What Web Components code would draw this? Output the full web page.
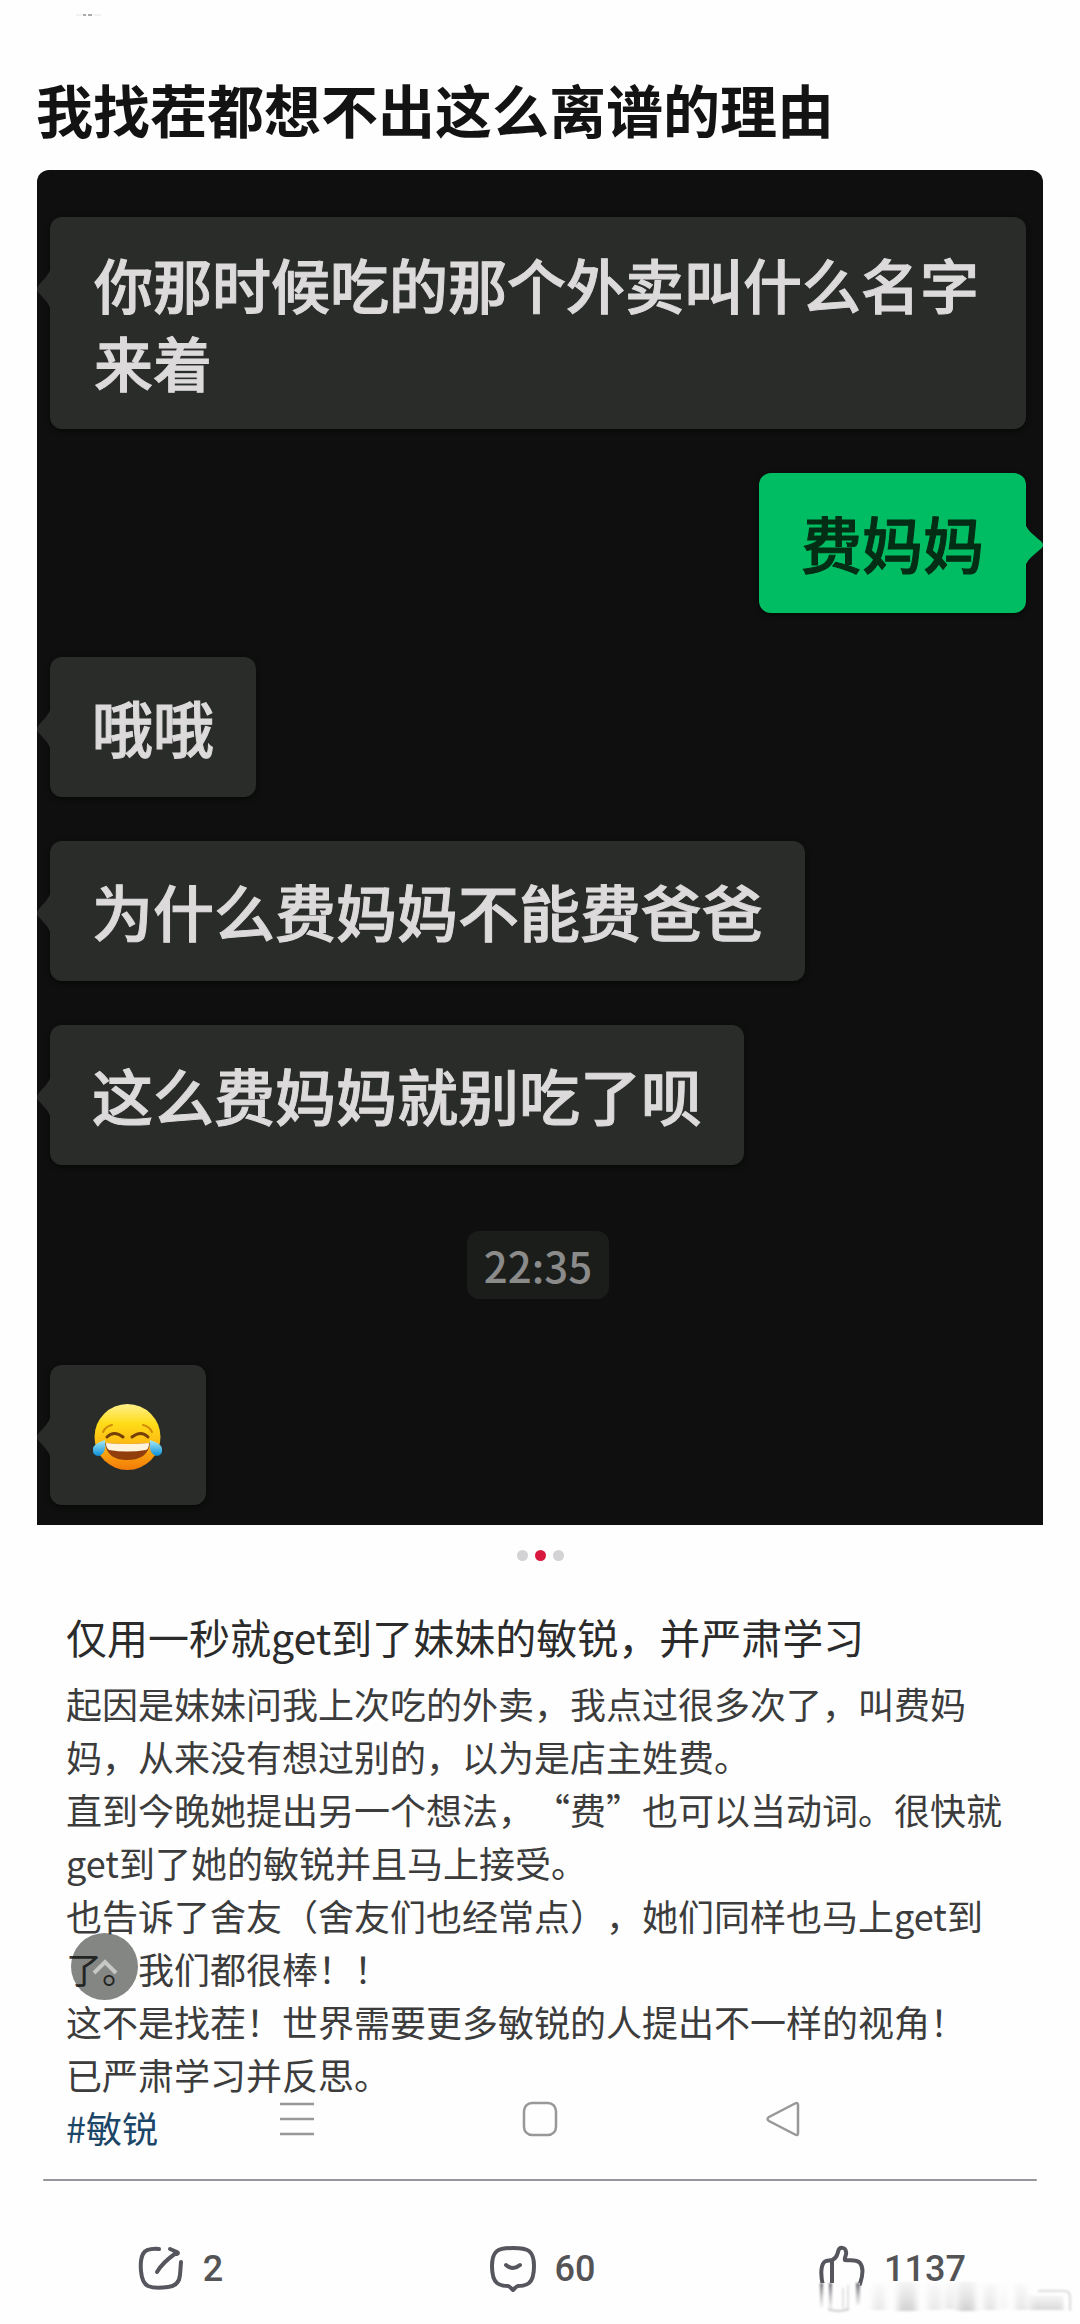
<!DOCTYPE html>
<html lang="zh-CN">
<head>
<meta charset="utf-8">
<meta name="viewport" content="width=device-width, initial-scale=1">
<title>我找茬都想不出这么离谱的理由</title>
<style>
  body { margin: 0; background: #fefefe; color: #111; font-family: "Noto Sans CJK SC", sans-serif; }
</style>
</head>
<body>
<post-page>
  <post-title slot="title">我找茬都想不出这么离谱的理由</post-title>
  <chat-shot slot="media">
    <chat-bubble long>你那时候吃的那个外卖叫什么名字来着</chat-bubble>
    <chat-bubble mine>费妈妈</chat-bubble>
    <chat-bubble>哦哦</chat-bubble>
    <chat-bubble>为什么费妈妈不能费爸爸</chat-bubble>
    <chat-bubble>这么费妈妈就别吃了呗</chat-bubble>
    <chat-time>22:35</chat-time>
    <chat-bubble><joy-face></joy-face></chat-bubble>
  </chat-shot>
  <page-dots slot="media"></page-dots>
  <post-note slot="note">
    <span slot="heading">仅用一秒就get到了妹妹的敏锐，并严肃学习</span>
    <div>起因是妹妹问我上次吃的外卖，我点过很多次了，叫费妈妈，从来没有想过别的，以为是店主姓费。</div>
    <div>直到今晚她提出另一个想法，“费”也可以当动词。很快就get到了她的敏锐并且马上接受。</div>
    <div>也告诉了舍友（舍友们也经常点），她们同样也马上get到了。我们都很棒！！</div>
    <div>这不是找茬！世界需要更多敏锐的人提出不一样的视角！</div>
    <div>已严肃学习并反思。</div>
    <span slot="tag">#敏锐</span>
  </post-note>
  <action-bar slot="actions">
    <action-item kind="share" label="转发">2</action-item>
    <action-item kind="comment" label="评论">60</action-item>
    <action-item kind="like" label="点赞">1137</action-item>
  </action-bar>
</post-page>

<script>
  const define = (name, html, setup) => {
    const template = document.createElement('template');
    template.innerHTML = html;
    customElements.define(name, class extends HTMLElement {
      constructor() {
        super();
        this.attachShadow({ mode: 'open' }).append(template.content.cloneNode(true));
      }
      connectedCallback() { if (setup) setup(this, this.shadowRoot); }
    });
  };

  define('post-page', `
    <style>
      :host { display: block; }
      header { height: 70px; }
      header svg { display: block; margin-left: 74px; padding-top: 12px; }
      .media { padding: 24px 37px 0; }
      .rule { height: 2px; margin: 25px 43px 0; border-radius: 2px; background: #95959a; }
    </style>
    <header><svg width="30" height="6" viewBox="0 0 30 6" aria-hidden="true"><path d="M2 3h6M20 3h7" stroke="#e4e4e4"/><path d="M9 3h3M14 3h4" stroke="#aaa" stroke-width="2"/></svg></header>
    <main>
      <slot name="title"></slot>
      <div class="media"><slot name="media"></slot></div>
      <slot name="note"></slot>
      <div class="rule"></div>
    </main>
    <slot name="actions"></slot>`);

  define('post-title', `
    <style>
      :host { display: block; padding: 0 36px; }
      h1 { margin: 0; font-size: 57px; line-height: 76px; font-weight: 700; color: #131313; }
    </style>
    <h1><slot></slot></h1>`);

  define('chat-shot', `
    <style>
      :host { display: flex; flex-direction: column; align-items: flex-start; gap: 44px;
        padding: 47px 17px 20px 13px; background: #0f0f0f; border-radius: 12px 12px 0 0; }
    </style>
    <slot></slot>`);

  define('chat-bubble', `
    <style>
      :host { display: block; position: relative; padding: 31px 42px; border-radius: 12px;
        background: #292c29; color: #dcdadb; font-size: 61px; line-height: 78px; font-weight: 500;
        -webkit-text-stroke: 1px currentColor; box-shadow: 0 2px 5px #060a06; }
      :host([long]) { padding: 28px 44px; font-size: 59px; }
      :host([mine]) { align-self: flex-end; background: #00bd63; color: #032d14; }
      svg { position: absolute; top: 50px; left: -13px; fill: #292c29; }
      :host([mine]) svg { left: auto; right: -17px; width: 18px; transform: scaleX(-1); fill: #00bd63; }
    </style>
    <svg width="14" height="44" viewBox="0 0 14 44" preserveAspectRatio="none" aria-hidden="true"><path d="M14 0Q13 5 9 10L1 19Q-1 22 1 25L9 34Q13 39 14 44Z"/></svg>
    <slot></slot>`);

  define('chat-time', `
    <style>
      :host { display: block; align-self: center; margin: 22px 0; padding: 9px 17px; border-radius: 12px;
        background: #1b1d1b; color: #8b8b8b; font-size: 42px; line-height: 50px; font-weight: 500; }
    </style>
    <slot></slot>`);

  define('joy-face', `
    <style>:host { display: flex; align-items: center; height: 78px; } svg { display: block; margin-top: 4px; }</style>
    <svg width="72" height="68" viewBox="0 0 72 68" role="img" aria-label="笑哭">
      <defs>
        <linearGradient id="skin" x1="0" y1="0" x2="0" y2="1"><stop offset="0" stop-color="#fff08a"/><stop offset=".3" stop-color="#ffdc18"/><stop offset=".6" stop-color="#fdb913"/><stop offset="1" stop-color="#f27a08"/></linearGradient>
        <linearGradient id="tear" x1="0" y1="0" x2="0" y2="1"><stop offset="0" stop-color="#a9eaf5"/><stop offset="1" stop-color="#0a8fd8"/></linearGradient>
      </defs>
      <circle cx="35.500" cy="34" r="33" fill="url(#skin)"/>
      <path d="M11 29Q14 23 20 22M60 29Q57 23 51 22" fill="none" stroke="#d08a08" stroke-width="2" stroke-linecap="round"/>
      <path d="M15 34Q22 27 31 34M40 34Q49 27 56 34" fill="none" stroke="#744008" stroke-width="3" stroke-linecap="round"/>
      <path d="M13 40Q35 42 58 40Q56 57 35 57Q15 57 13 40Z" fill="#923d0c"/>
      <path d="M14 40Q35 42 57 40Q57 46 54 47Q35 50 17 47Q14 45 14 40Z" fill="#fff3dc"/>
      <path d="M13 37Q15 50 7 53Q0 53 1 45Q3 40 13 37ZM58 37Q56 50 64 53Q71 53 70 45Q68 40 58 37Z" fill="url(#tear)"/>
    </svg>`);

  define('page-dots', `
    <style>
      :host { display: flex; justify-content: center; gap: 7px; padding: 25px 0 47px; }
      button { width: 11px; height: 11px; padding: 0; border: 0; border-radius: 50%; background: #d3d3d5; }
      button[aria-current] { background: #d9183f; }
    </style>
    <button aria-label="第1张"></button><button aria-label="第2张" aria-current="true"></button><button aria-label="第3张"></button>`);

  define('post-note', `
    <style>
      :host { display: block; position: relative; padding: 0 66px; text-spacing-trim: space-all; }
      h2 { margin: 0 0 12px; font-size: 41px; line-height: 57px; font-weight: 400; color: #2b2b2b; }
      .body { position: relative; font-size: 36px; line-height: 53px; color: #3c3c3c; }
      a { color: #1c4668; text-decoration: none; }
    </style>
    <h2><slot name="heading"></slot></h2>
    <div class="body">
      <slot></slot>
      <a href="#tag"><slot name="tag"></slot></a>
      <top-button></top-button>
    </div>
    <system-nav></system-nav>`);

  define('top-button', `
    <style>
      :host { position: absolute; left: 5px; top: 256px; }
      button { display: grid; place-items: center; width: 67px; height: 67px; padding: 0; border: 0; border-radius: 50%; background: rgba(10, 14, 10, .5); }
    </style>
    <button aria-label="回到顶部"><svg width="26" height="18" viewBox="0 0 26 18"><path d="M2 15L13 4L24 15" fill="none" stroke="#c6c7c6" stroke-width="4"/></svg></button>`);

  define('system-nav', `
    <style>
      :host { position: absolute; left: 0; right: 0; bottom: 17px; display: grid; grid-template-columns: repeat(3, 22.5%); justify-content: center; justify-items: center; pointer-events: none; }
      button { display: block; padding: 0; border: 0; background: none; pointer-events: auto; }
      svg { display: block; fill: none; stroke: #98989a; stroke-width: 2.5; }
    </style>
    <button aria-label="最近任务"><svg width="36" height="36" viewBox="0 0 36 36"><path d="M1 3H35M1 18H35M1 33H35"/></svg></button>
    <button aria-label="主页"><svg width="36" height="36" viewBox="0 0 36 36"><rect x="2" y="2" width="32" height="32" rx="8"/></svg></button>
    <button aria-label="返回"><svg width="36" height="36" viewBox="0 0 36 36"><path d="M30 2.500Q33 .8 33 4V32Q33 35.200 30 33.500L4 20Q1 18 4 16Z"/></svg></button>`);

  define('action-bar', `
    <style>
      :host { display: grid; position: relative; grid-template-columns: 15fr 15fr 14fr; justify-items: center; padding: 63px 18px 30px 0; }
      .mark { position: absolute; right: 0; bottom: 6px; }
    </style>
    <slot></slot>
    <svg class="mark" width="264" height="38" viewBox="0 0 264 38" aria-hidden="true">
      <defs>
        <filter id="soft" x="-20%" y="-20%" width="140%" height="140%"><feGaussianBlur stdDeviation="3 .8"/></filter>
        <filter id="thin"><feGaussianBlur stdDeviation=".8"/></filter>
        <linearGradient id="fade" x1="0" y1="0" x2="0" y2="1"><stop offset="0" stop-color="#ddd" stop-opacity=".3"/><stop offset="1" stop-color="#d0d0d0"/></linearGradient>
        <linearGradient id="dark" x1="0" y1="0" x2="0" y2="1"><stop offset="0" stop-color="#66666e"/><stop offset="1" stop-color="#aaa" stop-opacity=".15"/></linearGradient>
      </defs>
      <path d="M4 3H44V38H4Z" fill="#fefefe"/>
      <g filter="url(#soft)" fill="url(#fade)">
        <rect x="57" y="4" width="12" height="26" opacity=".5"/><rect x="82" y="2" width="18" height="29"/>
        <rect x="112" y="3" width="13" height="27" opacity=".5"/><rect x="130" y="3" width="8" height="26" opacity=".6"/>
        <rect x="142" y="2" width="17" height="29"/><rect x="168" y="4" width="12" height="26" opacity=".6"/>
        <rect x="186" y="4" width="4" height="25" opacity=".4"/><rect x="200" y="4" width="10" height="26" opacity=".6"/>
        <rect x="214" y="14" width="34" height="16" opacity=".8"/>
      </g>
      <g filter="url(#thin)">
        <rect x="4" y="3" width="3" height="24" fill="url(#dark)"/><rect x="13" y="3" width="3" height="26" fill="url(#dark)"/>
        <rect x="40" y="3" width="4" height="22" fill="url(#dark)"/>
        <path d="M27 8V28M32 5V31" stroke="#e2e2e2" stroke-width="2"/>
        <path d="M12 29Q22 33 32 29" fill="none" stroke="#ccc" stroke-width="2"/>
        <path d="M222 11H248Q254 11 254 17V31" fill="none" stroke="#dadada" stroke-width="2"/>
        <path d="M216 14H245Q250 14 250 19V30" fill="none" stroke="#fff" stroke-width="3"/>
      </g>
    </svg>`);

  const icons = {
    share: '<path d="M20 3Q7 2 4 8Q1 14 2 25Q3 37 9 40Q16 43 29 41Q40 40 41 29L42 16"/><path d="M18 26Q23 17 37 7M31 3L38 6Q40 7 38 8"/>',
    comment: '<path d="M22 2Q34 2 38 5Q43 9 43 20Q43 33 38 37Q34 40 27 40Q26 40 22 44Q18 40 17 40Q10 40 6 37Q1 33 1 20Q1 9 6 5Q10 2 22 2Z"/><path d="M15 19Q22 25 29 19"/>',
    like: '<path d="M3 40C0 27 1 17 6 15L12 14C17 12 17 9 18 6C19 0 26 1 26 6C27 9 24 11 25 14C31 15 36 13 40 17C44 22 42 32 40 38M12 15V40"/>'
  };
  define('action-item', `
    <style>
      :host { display: block; }
      button { display: flex; align-items: center; gap: 20px; height: 50px; padding: 0; border: 0; background: none; font: 500 36px/50px Roboto, sans-serif; color: #545456; }
      svg { display: block; overflow: visible; fill: none; stroke: #56565e; stroke-width: 4; stroke-linecap: round; stroke-linejoin: round; }
    </style>
    <button><svg width="44" height="46" viewBox="0 0 44 46" aria-hidden="true"></svg><span><slot></slot></span></button>`,
    (host, root) => {
      root.querySelector('svg').innerHTML = icons[host.getAttribute('kind')];
      root.querySelector('button').title = host.getAttribute('label');
    });
</script>
</body>
</html>
